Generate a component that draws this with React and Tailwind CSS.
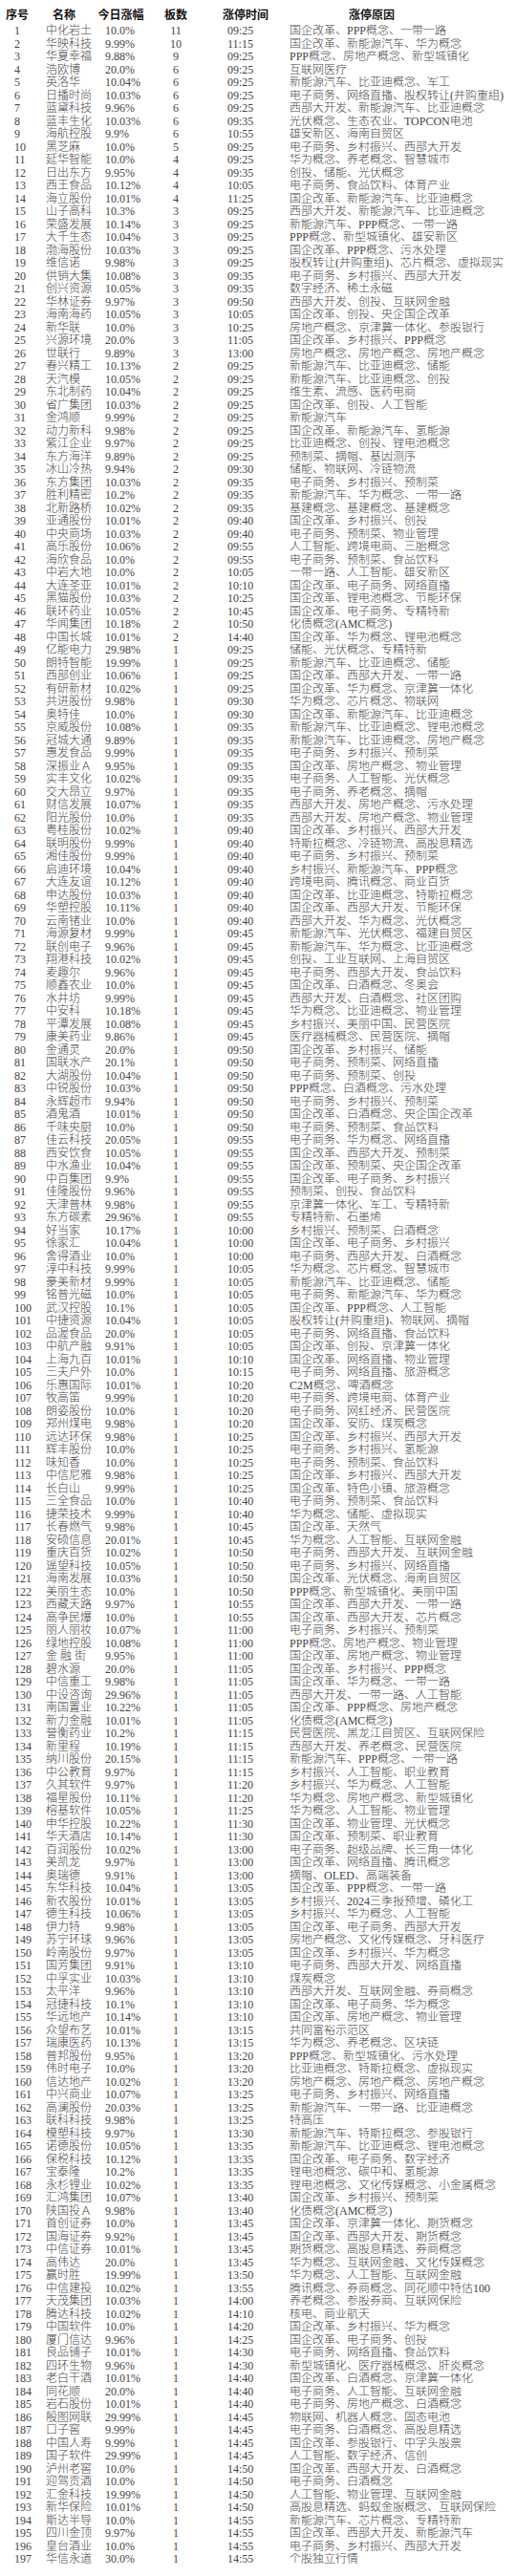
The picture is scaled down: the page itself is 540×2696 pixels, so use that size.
import React from "react";

const raw = `中化岩土|10.0%|11|09:25|国企改革、PPP概念、一带一路
华映科技|9.99%|10|11:15|国企改革、新能源汽车、华为概念
华夏幸福|9.88%|9|09:25|PPP概念、房地产概念、新型城镇化
浩欧博|20.0%|6|09:25|互联网医疗
英洛华|10.04%|6|09:25|新能源汽车、比亚迪概念、军工
日播时尚|10.03%|6|09:25|电子商务、网络直播、股权转让(并购重组)
蓝黛科技|9.96%|6|09:25|西部大开发、新能源汽车、比亚迪概念
蓝丰生化|10.03%|6|09:35|光伏概念、生态农业、TOPCON电池
海航控股|9.9%|6|10:55|雄安新区、海南自贸区
黑芝麻|10.0%|5|09:25|电子商务、乡村振兴、西部大开发
延华智能|10.0%|4|09:25|华为概念、养老概念、智慧城市
日出东方|9.95%|4|09:35|创投、储能、光伏概念
西王食品|10.12%|4|10:05|电子商务、食品饮料、体育产业
海立股份|10.01%|4|11:25|国企改革、新能源汽车、比亚迪概念
山子高科|10.3%|3|09:25|西部大开发、新能源汽车、比亚迪概念
荣盛发展|10.14%|3|09:25|新能源汽车、PPP概念、一带一路
大千生态|10.04%|3|09:25|PPP概念、新型城镇化、雄安新区
渤海股份|10.03%|3|09:25|国企改革、PPP概念、污水处理
维信诺|9.98%|3|09:25|股权转让(并购重组)、芯片概念、虚拟现实
供销大集|10.08%|3|09:35|电子商务、乡村振兴、西部大开发
创兴资源|10.05%|3|09:35|数字经济、稀土永磁
华林证券|9.97%|3|09:50|西部大开发、创投、互联网金融
海南海药|10.05%|3|10:05|国企改革、创投、央企国企改革
新华联|10.0%|3|10:25|房地产概念、京津冀一体化、参股银行
兴源环境|20.0%|3|11:05|国企改革、乡村振兴、PPP概念
世联行|9.89%|3|13:00|房地产概念、房地产概念、房地产概念
春兴精工|10.13%|2|09:25|新能源汽车、比亚迪概念、储能
天汽模|10.05%|2|09:25|新能源汽车、比亚迪概念、创投
东北制药|10.04%|2|09:25|维生素、流感、医药电商
省广集团|10.03%|2|09:25|国企改革、创投、人工智能
金鸿顺|9.99%|2|09:25|新能源汽车
动力新科|9.98%|2|09:25|国企改革、新能源汽车、氢能源
紫江企业|9.97%|2|09:25|比亚迪概念、创投、锂电池概念
东方海洋|9.89%|2|09:25|预制菜、摘帽、基因测序
冰山冷热|9.94%|2|09:30|储能、物联网、冷链物流
东方集团|10.03%|2|09:35|电子商务、乡村振兴、预制菜
胜利精密|10.2%|2|09:35|新能源汽车、华为概念、一带一路
北新路桥|10.02%|2|09:35|基建概念、基建概念、基建概念
亚通股份|10.01%|2|09:40|国企改革、乡村振兴、创投
中央商场|10.03%|2|09:40|电子商务、预制菜、物业管理
高乐股份|10.06%|2|09:55|人工智能、跨境电商、三胎概念
海欣食品|10.0%|2|09:55|电子商务、预制菜、食品饮料
中岩大地|10.0%|2|10:05|一带一路、人工智能、雄安新区
大连圣亚|10.01%|2|10:10|国企改革、电子商务、网络直播
黑猫股份|10.03%|2|10:25|国企改革、锂电池概念、节能环保
联环药业|10.05%|2|10:45|国企改革、电子商务、专精特新
华闻集团|10.18%|2|10:50|化债概念(AMC概念)
中国长城|10.01%|2|14:40|国企改革、华为概念、锂电池概念
亿能电力|29.98%|1|09:25|储能、光伏概念、专精特新
朗特智能|19.99%|1|09:25|新能源汽车、比亚迪概念、储能
西部创业|10.06%|1|09:25|国企改革、西部大开发、一带一路
有研新材|10.02%|1|09:25|国企改革、华为概念、京津冀一体化
共进股份|9.98%|1|09:30|华为概念、芯片概念、物联网
奥特佳|10.0%|1|09:30|国企改革、新能源汽车、比亚迪概念
京威股份|10.08%|1|09:35|新能源汽车、比亚迪概念、锂电池概念
冠城大通|9.89%|1|09:35|新能源汽车、比亚迪概念、房地产概念
惠发食品|9.99%|1|09:35|电子商务、乡村振兴、预制菜
深振业Ａ|9.95%|1|09:35|国企改革、房地产概念、物业管理
实丰文化|10.02%|1|09:35|电子商务、人工智能、光伏概念
交大昂立|9.97%|1|09:35|电子商务、养老概念、摘帽
财信发展|10.07%|1|09:35|西部大开发、房地产概念、污水处理
阳光股份|10.0%|1|09:35|西部大开发、房地产概念、物业管理
粤桂股份|10.02%|1|09:40|国企改革、乡村振兴、西部大开发
联明股份|9.99%|1|09:40|特斯拉概念、冷链物流、高股息精选
湘佳股份|9.99%|1|09:40|电子商务、乡村振兴、预制菜
启迪环境|10.04%|1|09:40|乡村振兴、新能源汽车、PPP概念
大连友谊|10.12%|1|09:40|跨境电商、腾讯概念、商业百货
申达股份|10.03%|1|09:40|国企改革、比亚迪概念、特斯拉概念
华塑控股|10.11%|1|09:40|国企改革、西部大开发、节能环保
云南锗业|10.0%|1|09:40|西部大开发、华为概念、光伏概念
海源复材|9.99%|1|09:45|新能源汽车、光伏概念、福建自贸区
联创电子|9.96%|1|09:45|新能源汽车、华为概念、比亚迪概念
翔港科技|10.02%|1|09:45|创投、工业互联网、上海自贸区
麦趣尔|9.96%|1|09:45|电子商务、西部大开发、食品饮料
顺鑫农业|10.0%|1|09:45|国企改革、白酒概念、冬奥会
水井坊|9.99%|1|09:45|西部大开发、白酒概念、社区团购
中安科|10.18%|1|09:45|华为概念、比亚迪概念、物业管理
平潭发展|10.08%|1|09:45|乡村振兴、美丽中国、民营医院
康美药业|9.86%|1|09:45|医疗器械概念、民营医院、摘帽
金通灵|20.0%|1|09:50|国企改革、乡村振兴、储能
国联水产|20.1%|1|09:50|电子商务、预制菜、网络直播
大湖股份|10.04%|1|09:50|电子商务、预制菜、创投
中锐股份|10.03%|1|09:50|PPP概念、白酒概念、污水处理
永辉超市|9.94%|1|09:50|电子商务、乡村振兴、预制菜
酒鬼酒|10.01%|1|09:50|国企改革、白酒概念、央企国企改革
千味央厨|10.0%|1|09:50|电子商务、预制菜、食品饮料
佳云科技|20.05%|1|09:55|电子商务、华为概念、网络直播
西安饮食|10.05%|1|09:55|国企改革、西部大开发、预制菜
中水渔业|10.04%|1|09:55|国企改革、预制菜、央企国企改革
中百集团|9.9%|1|09:55|国企改革、电子商务、乡村振兴
佳隆股份|9.96%|1|09:55|预制菜、创投、食品饮料
天津普林|9.98%|1|09:55|京津冀一体化、军工、专精特新
东方碳素|29.96%|1|09:55|专精特新、石墨烯
好当家|10.17%|1|10:00|乡村振兴、预制菜、白酒概念
徐家汇|10.04%|1|10:00|国企改革、电子商务、乡村振兴
舍得酒业|10.0%|1|10:00|电子商务、西部大开发、白酒概念
淳中科技|9.99%|1|10:05|华为概念、芯片概念、智慧城市
豪美新材|9.99%|1|10:05|新能源汽车、比亚迪概念、储能
铭普光磁|10.0%|1|10:05|电子商务、新能源汽车、华为概念
武汉控股|10.1%|1|10:05|国企改革、PPP概念、人工智能
中捷资源|10.04%|1|10:05|股权转让(并购重组)、物联网、摘帽
品渥食品|20.0%|1|10:05|电子商务、网络直播、食品饮料
中航产融|9.91%|1|10:05|国企改革、创投、京津冀一体化
上海九百|10.01%|1|10:10|国企改革、网络直播、物业管理
三夫户外|10.0%|1|10:15|电子商务、网络直播、旅游概念
乐惠国际|10.01%|1|10:20|C2M概念、啤酒概念
牧高笛|9.99%|1|10:20|电子商务、跨境电商、体育产业
朗姿股份|10.0%|1|10:20|电子商务、网红经济、民营医院
郑州煤电|9.98%|1|10:20|国企改革、安防、煤炭概念
远达环保|9.98%|1|10:25|国企改革、乡村振兴、西部大开发
辉丰股份|10.0%|1|10:25|电子商务、乡村振兴、氢能源
味知香|10.0%|1|10:25|电子商务、预制菜、食品饮料
中信尼雅|9.98%|1|10:25|国企改革、乡村振兴、西部大开发
长白山|9.99%|1|10:25|国企改革、特色小镇、旅游概念
三全食品|10.0%|1|10:40|电子商务、预制菜、食品饮料
捷荣技术|9.99%|1|10:40|华为概念、储能、虚拟现实
长春燃气|9.98%|1|10:45|国企改革、天然气
安硕信息|20.01%|1|10:45|华为概念、人工智能、互联网金融
重庆百货|10.02%|1|10:50|电子商务、西部大开发、互联网金融
遥望科技|10.05%|1|10:50|电子商务、乡村振兴、网络直播
海南发展|10.03%|1|10:50|国企改革、光伏概念、海南自贸区
美丽生态|10.0%|1|10:50|PPP概念、新型城镇化、美丽中国
西藏天路|9.97%|1|10:55|国企改革、西部大开发、一带一路
高争民爆|10.0%|1|10:55|国企改革、西部大开发、芯片概念
丽人丽妆|10.07%|1|11:00|电子商务、乡村振兴、预制菜
绿地控股|10.08%|1|11:00|PPP概念、房地产概念、物业管理
金 融 街|9.95%|1|11:00|国企改革、房地产概念、物业管理
碧水源|20.0%|1|11:05|国企改革、乡村振兴、PPP概念
中信重工|9.98%|1|11:05|国企改革、华为概念、一带一路
中设咨询|29.96%|1|11:05|西部大开发、一带一路、人工智能
南国置业|10.22%|1|11:05|国企改革、PPP概念、房地产概念
新力金融|10.01%|1|11:05|化债概念(AMC概念)
誉衡药业|10.2%|1|11:15|民营医院、黑龙江自贸区、互联网保险
新里程|10.19%|1|11:15|西部大开发、养老概念、民营医院
纳川股份|20.15%|1|11:15|新能源汽车、PPP概念、一带一路
中公教育|9.97%|1|11:15|乡村振兴、人工智能、职业教育
久其软件|9.97%|1|11:20|乡村振兴、华为概念、人工智能
福星股份|10.11%|1|11:20|华为概念、房地产概念、新型城镇化
榕基软件|10.05%|1|11:25|华为概念、人工智能、物业管理
申华控股|10.22%|1|11:30|国企改革、物业管理、光伏概念
华天酒店|10.14%|1|11:30|国企改革、预制菜、职业教育
百润股份|10.02%|1|13:00|电子商务、超级品牌、长三角一体化
美凯龙|9.97%|1|13:00|国企改革、网络直播、腾讯概念
奥瑞德|9.91%|1|13:00|摘帽、OLED、高端装备
东华科技|10.04%|1|13:05|国企改革、PPP概念、一带一路
新农股份|10.01%|1|13:05|乡村振兴、2024三季报预增、磷化工
德生科技|10.06%|1|13:05|乡村振兴、华为概念、人工智能
伊力特|9.98%|1|13:05|国企改革、电子商务、西部大开发
苏宁环球|9.96%|1|13:05|房地产概念、文化传媒概念、牙科医疗
岭南股份|9.97%|1|13:05|国企改革、乡村振兴、华为概念
国芳集团|9.91%|1|13:10|电子商务、西部大开发、网络直播
中孚实业|10.03%|1|13:10|煤炭概念
太平洋|9.96%|1|13:10|西部大开发、互联网金融、券商概念
冠捷科技|10.1%|1|13:10|国企改革、电子商务、华为概念
华远地产|10.14%|1|13:10|国企改革、房地产概念、物业管理
众望布艺|10.01%|1|13:15|共同富裕示范区
瑞康医药|10.13%|1|13:15|华为概念、养老概念、区块链
普邦股份|9.95%|1|13:20|PPP概念、新型城镇化、污水处理
伟时电子|10.0%|1|13:20|比亚迪概念、特斯拉概念、虚拟现实
信达地产|10.02%|1|13:20|房地产概念、房地产概念、房地产概念
中兴商业|10.07%|1|13:25|电子商务、乡村振兴、网络直播
高澜股份|20.03%|1|13:25|新能源汽车、一带一路、比亚迪概念
联科科技|9.98%|1|13:25|特高压
模塑科技|9.97%|1|13:30|新能源汽车、特斯拉概念、参股银行
诺德股份|10.05%|1|13:35|新能源汽车、比亚迪概念、锂电池概念
保税科技|10.12%|1|13:35|国企改革、电子商务、数字经济
宝泰隆|10.2%|1|13:35|锂电池概念、碳中和、氢能源
永杉锂业|10.02%|1|13:35|锂电池概念、文化传媒概念、小金属概念
汇鸿集团|10.07%|1|13:40|国企改革、乡村振兴、预制菜
陕国投Ａ|9.98%|1|13:40|化债概念(AMC概念)
首创证券|10.0%|1|13:45|国企改革、京津冀一体化、期货概念
国海证券|9.92%|1|13:45|国企改革、西部大开发、期货概念
中信证券|10.01%|1|13:45|期货概念、高股息精选、券商概念
高伟达|20.0%|1|13:45|华为概念、互联网金融、文化传媒概念
赢时胜|19.99%|1|13:50|华为概念、人工智能、互联网金融
中信建投|10.02%|1|13:55|腾讯概念、券商概念、同花顺中特估100
天茂集团|10.03%|1|14:00|养老概念、参股券商、互联网保险
腾达科技|10.02%|1|14:10|核电、商业航天
中国软件|10.0%|1|14:20|国企改革、乡村振兴、华为概念
厦门信达|9.96%|1|14:25|国企改革、电子商务、创投
良品铺子|10.01%|1|14:30|电子商务、网络直播、食品饮料
四环生物|9.96%|1|14:30|新型城镇化、医疗器械概念、肝炎概念
老白干酒|10.01%|1|14:40|国企改革、白酒概念、京津冀一体化
同花顺|20.0%|1|14:40|电子商务、人工智能、互联网金融
岩石股份|10.01%|1|14:40|电子商务、房地产概念、白酒概念
殷图网联|29.99%|1|14:45|物联网、机器人概念、固态电池
口子窖|9.99%|1|14:45|电子商务、白酒概念、高股息精选
中国人寿|9.99%|1|14:45|国企改革、参股银行、中字头股票
国子软件|29.99%|1|14:45|人工智能、数字经济、信创
泸州老窖|10.0%|1|14:50|国企改革、西部大开发、白酒概念
迎驾贡酒|10.0%|1|14:50|电子商务、白酒概念
汇金科技|19.99%|1|14:50|人工智能、物业管理、互联网金融
新华保险|10.01%|1|14:50|高股息精选、蚂蚁金服概念、互联网保险
斯达半导|10.0%|1|14:55|新能源汽车、芯片概念、专精特新
四川金顶|9.97%|1|14:55|国企改革、西部大开发、新能源汽车
皇台酒业|10.0%|1|14:55|电子商务、乡村振兴、西部大开发
华信永道|30.0%|1|14:55|个股独立行情`;

const rows = raw.split("\n").map((line) => line.split("|"));

const App = () => {
  return (
    <div className="w-[540px] min-h-[2696px] overflow-hidden bg-white pt-[5px] text-[12px] text-[#444] font-['Liberation_Serif','Noto_Sans_CJK_SC',serif]">
      {/* header */}
      <div className="flex h-[21px] items-center whitespace-nowrap font-bold text-[#111]">
        <div className="w-[36px] text-center">序号</div>
        <div className="w-[62px] text-center">名称</div>
        <div className="w-[57px] text-center">今日涨幅</div>
        <div className="w-[58px] text-center">板数</div>
        <div className="w-[88px] text-center">涨停时间</div>
        <div className="w-[176px] text-center">涨停原因</div>
      </div>
      {rows.map(([name, pct, boards, time, reason], i) => (
        <div key={i} className="flex h-[13.5px] leading-[13.5px] whitespace-nowrap font-light">
          <div className="w-[36px] shrink-0 pl-[15px]">{i + 1}</div>
          <div className="w-[62px] shrink-0 pl-[12px]">{name}</div>
          <div className="w-[57px] shrink-0 pl-[12px]">{pct}</div>
          <div className="w-[58px] shrink-0 text-center">{boards}</div>
          <div className="w-[88px] shrink-0 pl-[25px]">{time}</div>
          <div className="flex-1 overflow-hidden pl-[2px]">{reason}</div>
        </div>
      ))}
    </div>
  );
};

export default App;
